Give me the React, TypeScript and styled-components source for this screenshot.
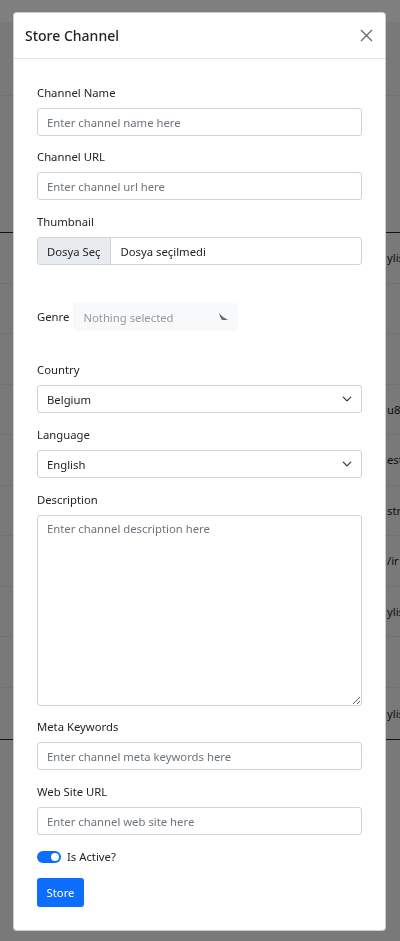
import React from 'react';
import styled, {createGlobalStyle} from 'styled-components';

const GlobalStyle = createGlobalStyle`
  * { box-sizing: border-box; }
  body {
    margin: 0;
    font-family: "Segoe UI", "Noto Sans", "Open Sans", sans-serif;
    font-size: 11.3px;
    color: #212529;
    background: #f3f3f3;
  }
`;

// page that sits behind the modal backdrop
const Page = styled.div`
  height: 941px;
  overflow: hidden;
`;

const TopBar = styled.div`
  height: 22px;
  background: #fff;
`;

const PageHead = styled.div`
  height: 74px;
  border-bottom: 1px solid #dee2e6;
`;

const TableHead = styled.div`
  height: 137px;
  border-bottom: 1px solid #212529;
`;

const Row = styled.div<{last?: boolean}>`
  height: ${(p) => (p.last ? 52 : 50.5)}px;
  border-bottom: 1px solid ${(p) => (p.last ? '#212529' : '#dee2e6')};
  display: flex;
  align-items: center;
`;

const Cell = styled.div`
  padding-left: 387px;
  font-size: 11.3px;
  white-space: nowrap;
`;

const Backdrop = styled.div`
  position: fixed;
  inset: 0;
  background: rgba(0, 0, 0, 0.5);
  padding: 12px 0 0 13px;
`;

const Modal = styled.div`
  width: 373px;
  background: #fff;
  border: 1px solid rgba(0, 0, 0, 0.2);
  border-radius: 4px;
  display: flex;
  flex-direction: column;
`;

const Header = styled.div`
  height: 46px;
  padding: 0 11px;
  border-bottom: 1px solid #dee2e6;
  display: flex;
  align-items: center;
  justify-content: space-between;
`;

const Title = styled.h5`
  margin: 0;
  font-size: 14px;
  font-weight: 500;
  color: #212529;
`;

const Close = styled.button`
  border: 0;
  background: transparent;
  padding: 0;
  width: 16px;
  height: 16px;
  display: flex;
  align-items: center;
  justify-content: center;
  cursor: pointer;
`;

const Body = styled.form`
  padding: 25px 23px 23px 23px;
  display: flex;
  flex-direction: column;
`;

const Group = styled.div<{gap?: number}>`
  margin-bottom: ${(p) => p.gap ?? 12}px;
`;

const Label = styled.label`
  display: block;
  line-height: 18px;
  margin-bottom: 6px;
  color: #212529;
`;

const Input = styled.input`
  display: block;
  width: 100%;
  height: 28px;
  padding: 0 9px;
  font: inherit;
  color: #212529;
  border: 1px solid #ced4da;
  border-radius: 3px;
  outline: none;
  &::placeholder { color: #6c757d; }
`;

const TextArea = styled.textarea`
  display: block;
  width: 100%;
  height: 191px;
  padding: 5px 9px;
  font: inherit;
  border: 1px solid #ced4da;
  border-radius: 3px;
  outline: none;
  resize: vertical;
  &::placeholder { color: #6c757d; }
`;

const FileBox = styled.div`
  display: flex;
  height: 28px;
  border: 1px solid #ced4da;
  border-radius: 3px;
  overflow: hidden;
  white-space: nowrap;
`;

const FileButton = styled.span`
  display: flex;
  align-items: center;
  flex: 0 0 72px;
  padding: 0 9px;
  background: #e9ecef;
  border-right: 1px solid #ced4da;
`;

const FileName = styled.span`
  display: flex;
  align-items: center;
  padding: 0 10px;
`;

const GenreRow = styled.div`
  display: flex;
  align-items: center;
  gap: 4px;
  margin-bottom: 30px;
`;

const GenreLabel = styled.label`
  line-height: 18px;
`;

const PickerButton = styled.div`
  width: 165px;
  height: 28px;
  padding: 0 10px;
  background: #f8f9fa;
  border-radius: 3px;
  color: #999;
  display: flex;
  align-items: center;
  justify-content: space-between;
`;

const SelectBox = styled.div`
  height: 28px;
  padding: 0 9px;
  border: 1px solid #ced4da;
  border-radius: 3px;
  display: flex;
  align-items: center;
  justify-content: space-between;
`;

const SwitchRow = styled.div`
  display: flex;
  align-items: center;
  gap: 6px;
  margin: 13px 0 12px;
  line-height: 18px;
`;

const Switch = styled.span`
  width: 24px;
  height: 12px;
  border-radius: 6px;
  background: #0d6efd;
  display: flex;
  align-items: center;
  justify-content: flex-end;
  padding: 0 2px;
  &::after {
    content: '';
    width: 8px;
    height: 8px;
    border-radius: 50%;
    background: #fff;
  }
`;

const StoreButton = styled.button`
  align-self: flex-start;
  width: 47px;
  height: 29px;
  padding: 0;
  border: 0;
  border-radius: 3px;
  background: #0d6efd;
  color: #fff;
  font: inherit;
`;

const Chevron = () => (
  <svg width="10" height="10" viewBox="0 0 16 16">
    <path d="M2 5l6 6 6-6" fill="none" stroke="#343a40" strokeWidth="2" strokeLinecap="round" strokeLinejoin="round" />
  </svg>
);

const rows = ['ylis', '', '', 'u8', 'est', 'stre', '/ir', 'ylis', '', 'ylis'];

const App: React.FC = () => {
  return (
    <>
      <GlobalStyle />
      <Page>
        <TopBar />
        <PageHead />
        <TableHead />
        {rows.map((text, i) => (
          <Row key={i} last={i === rows.length - 1}>
            <Cell>{text}</Cell>
          </Row>
        ))}
      </Page>
      <Backdrop>
        <Modal>
          <Header>
            <Title>Store Channel</Title>
            <Close type="button" aria-label="Close">
              <svg width="13" height="13" viewBox="0 0 13 13">
                <path d="M1 1l11 11M12 1L1 12" stroke="#6c6c6c" strokeWidth="1.4" />
              </svg>
            </Close>
          </Header>
          <Body onSubmit={(e) => e.preventDefault()}>
            <Group>
              <Label>Channel Name</Label>
              <Input placeholder="Enter channel name here" />
            </Group>
            <Group gap={13}>
              <Label>Channel URL</Label>
              <Input placeholder="Enter channel url here" />
            </Group>
            <Group gap={38}>
              <Label>Thumbnail</Label>
              <FileBox>
                <FileButton>Dosya Seç</FileButton>
                <FileName>Dosya seçilmedi</FileName>
              </FileBox>
            </Group>
            <GenreRow>
              <GenreLabel>Genre</GenreLabel>
              <PickerButton>
                Nothing selected
                <svg width="9" height="8" viewBox="0 0 9 8">
                  <path d="M0 0 Q4 5 9 7 L3 7 Q1 4 0 0Z" fill="#6a6a6a" />
                </svg>
              </PickerButton>
            </GenreRow>
            <Group gap={13}>
              <Label>Country</Label>
              <SelectBox>
                Belgium
                <Chevron />
              </SelectBox>
            </Group>
            <Group gap={13}>
              <Label>Language</Label>
              <SelectBox>
                English
                <Chevron />
              </SelectBox>
            </Group>
            <Group>
              <Label>Description</Label>
              <TextArea placeholder="Enter channel description here" />
            </Group>
            <Group gap={13}>
              <Label>Meta Keywords</Label>
              <Input placeholder="Enter channel meta keywords here" />
            </Group>
            <Group gap={0}>
              <Label>Web Site URL</Label>
              <Input placeholder="Enter channel web site here" />
            </Group>
            <SwitchRow>
              <Switch />
              Is Active?
            </SwitchRow>
            <StoreButton type="submit">Store</StoreButton>
          </Body>
        </Modal>
      </Backdrop>
    </>
  );
};

export default App;
